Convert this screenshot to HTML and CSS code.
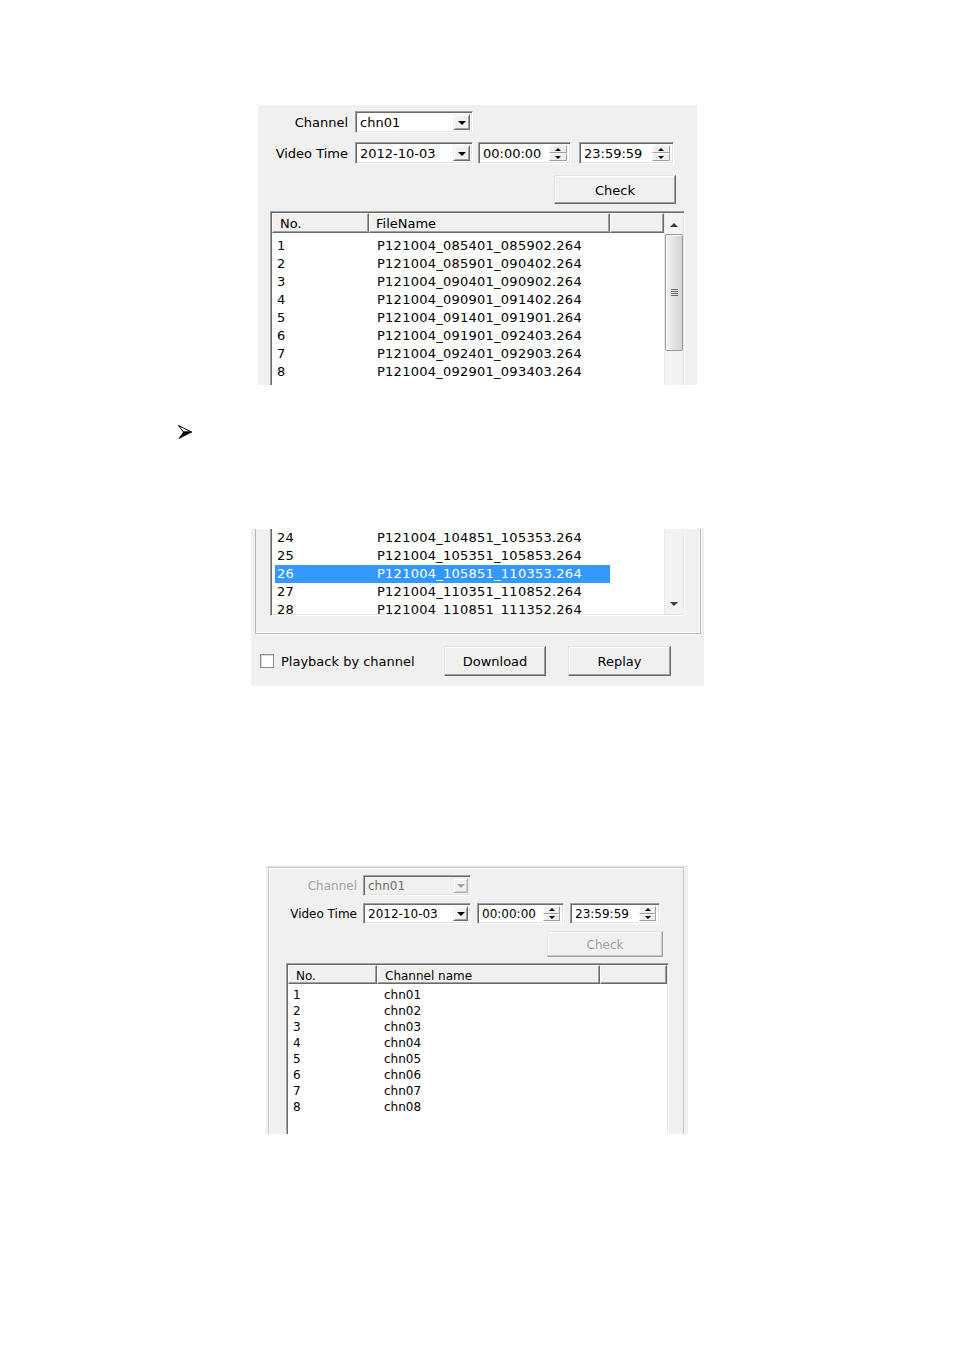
FILE: index.html
```html
<!DOCTYPE html>
<html>
<head>
<meta charset="utf-8">
<link rel="stylesheet" href="styles.css">
</head>
<body>
<div class="doc">

  <div class="fig fig1">
    <div class="frow r1">
      <span class="lbl">Channel</span>
      <div class="combo w-ch"><span class="val">chn01</span><span class="drop"><i class="tri"></i></span></div>
    </div>
    <div class="frow r2">
      <span class="lbl">Video Time</span>
      <div class="combo w-date"><span class="val">2012-10-03</span><span class="drop"><i class="tri"></i></span></div>
      <div class="spin w-t1"><span class="val">00:00:00</span><span class="arrows"><span class="half"><i class="up"></i></span><span class="half"><i class="dn"></i></span></span></div>
      <div class="spin w-t2"><span class="val">23:59:59</span><span class="arrows"><span class="half"><i class="up"></i></span><span class="half"><i class="dn"></i></span></span></div>
    </div>
    <div class="btn check">Check</div>
    <div class="list list1">
      <div class="lmain">
        <div class="lhead"><span class="hc c1">No.</span><span class="hc c2">FileName</span><span class="hc c3"></span></div>
        <div class="lbody">
          <div class="row"><span>1</span><span>P121004_085401_085902.264</span></div>
          <div class="row"><span>2</span><span>P121004_085901_090402.264</span></div>
          <div class="row"><span>3</span><span>P121004_090401_090902.264</span></div>
          <div class="row"><span>4</span><span>P121004_090901_091402.264</span></div>
          <div class="row"><span>5</span><span>P121004_091401_091901.264</span></div>
          <div class="row"><span>6</span><span>P121004_091901_092403.264</span></div>
          <div class="row"><span>7</span><span>P121004_092401_092903.264</span></div>
          <div class="row"><span>8</span><span>P121004_092901_093403.264</span></div>
        </div>
      </div>
      <div class="vscroll vs1">
        <span class="sbtn"><i class="sup"></i></span>
        <span class="thumb"><i class="grip"></i><i class="grip"></i><i class="grip"></i><i class="grip"></i></span>
      </div>
    </div>
  </div>

  <div class="bullet">
    <svg width="14" height="14" viewBox="0 0 14 14">
      <polygon points="0.5,0.5 13.5,7 5.5,7" fill="#fff" stroke="#000" stroke-width="1" stroke-linejoin="miter"/>
      <polygon points="5.5,7 13.5,7 1,13.5" fill="#000" stroke="#000" stroke-width="0.8"/>
    </svg>
  </div>

  <div class="fig fig2">
    <div class="frame2">
      <div class="list list2">
        <div class="lmain">
          <div class="lbody">
            <div class="row"><span>24</span><span>P121004_104851_105353.264</span></div>
            <div class="row"><span>25</span><span>P121004_105351_105853.264</span></div>
            <div class="row sel"><span>26</span><span>P121004_105851_110353.264</span></div>
            <div class="row"><span>27</span><span>P121004_110351_110852.264</span></div>
            <div class="row"><span>28</span><span>P121004_110851_111352.264</span></div>
          </div>
        </div>
        <div class="vscroll vs2">
          <span class="sbtn"><i class="sdn"></i></span>
        </div>
      </div>
    </div>
    <div class="brow">
      <span class="chk"></span>
      <span class="chklbl">Playback by channel</span>
      <div class="btn dl">Download</div>
      <div class="btn rp">Replay</div>
    </div>
  </div>

  <div class="fig fig3">
    <div class="frame3">
      <div class="frow r1">
        <span class="lbl dis">Channel</span>
        <div class="combo w-ch disabled"><span class="val">chn01</span><span class="drop"><i class="tri"></i></span></div>
      </div>
      <div class="frow r2">
        <span class="lbl">Video Time</span>
        <div class="combo w-date"><span class="val">2012-10-03</span><span class="drop"><i class="tri"></i></span></div>
        <div class="spin w-t1"><span class="val">00:00:00</span><span class="arrows"><span class="half"><i class="up"></i></span><span class="half"><i class="dn"></i></span></span></div>
        <div class="spin w-t2"><span class="val">23:59:59</span><span class="arrows"><span class="half"><i class="up"></i></span><span class="half"><i class="dn"></i></span></span></div>
      </div>
      <div class="btn check disabled">Check</div>
      <div class="list list3">
        <div class="lmain">
          <div class="lhead"><span class="hc c1">No.</span><span class="hc c2">Channel name</span><span class="hc c3"></span></div>
          <div class="lbody">
            <div class="row"><span>1</span><span>chn01</span></div>
            <div class="row"><span>2</span><span>chn02</span></div>
            <div class="row"><span>3</span><span>chn03</span></div>
            <div class="row"><span>4</span><span>chn04</span></div>
            <div class="row"><span>5</span><span>chn05</span></div>
            <div class="row"><span>6</span><span>chn06</span></div>
            <div class="row"><span>7</span><span>chn07</span></div>
            <div class="row"><span>8</span><span>chn08</span></div>
          </div>
        </div>
      </div>
    </div>
  </div>

</div>
</body>
</html>
```

FILE: styles.css
```css
* { box-sizing: border-box; }
html, body { margin: 0; padding: 0; background: #fff; }
body { font-family: "DejaVu Sans", Verdana, sans-serif; font-size: 13px; color: #000; }

.doc { display: flex; flex-direction: column; align-items: flex-start; }

.fig { background: #f0f0f0; overflow: hidden; display: flex; flex-direction: column; align-items: flex-start; flex-shrink: 0; }

/* ---------- common controls ---------- */
.frow { display: flex; align-items: center; flex-shrink: 0; }
.lbl { text-align: right; white-space: nowrap; padding-top: 1px; }
.lbl.dis { color: #a3a3a3; }

.combo, .spin {
  display: flex; align-items: stretch; height: 100%;
  background: #fff;
  border: 1px solid; border-color: #a0a0a0 #fff #fff #a0a0a0;
  box-shadow: inset 1px 1px 0 #696969, inset -1px -1px 0 #e3e3e3;
  padding: 2px 2px 2px 2px;
  flex-shrink: 0;
}
.val { flex: 1; display: flex; align-items: center; padding-left: 2px; padding-top: 1px; white-space: nowrap; }

.drop {
  width: 17px; display: flex; align-items: center; justify-content: center;
  background: #f0f0f0;
  border: 1px solid; border-color: #f0f0f0 #696969 #696969 #f0f0f0;
  box-shadow: inset 1px 1px 0 #fff, inset -1px -1px 0 #a0a0a0;
}
.tri { width: 0; height: 0; border-left: 4px solid transparent; border-right: 4px solid transparent; border-top: 4px solid #000; margin-top: 1px; }

.arrows { width: 18px; display: flex; flex-direction: column; margin-right: 1px; }
.half {
  flex: 1; display: flex; align-items: center; justify-content: center;
  background: #f0f0f0;
  border: 1px solid; border-color: #fff #a0a0a0 #a0a0a0 #fff;
}
.up { width: 0; height: 0; border-left: 3px solid transparent; border-right: 3px solid transparent; border-bottom: 3px solid #000; }
.dn { width: 0; height: 0; border-left: 3px solid transparent; border-right: 3px solid transparent; border-top: 3px solid #000; }

.btn {
  display: flex; align-items: center; justify-content: center; flex-shrink: 0;
  background: #f0f0f0; padding-top: 1px;
  border: 1px solid; border-color: #e3e3e3 #696969 #696969 #e3e3e3;
  box-shadow: inset -1px -1px 0 #a0a0a0, inset 1px 1px 0 #fff;
}
.btn.disabled { color: #a0a0a0; border-color: #e3e3e3 #a0a0a0 #a0a0a0 #e3e3e3; box-shadow: inset -1px -1px 0 #c8c8c8, inset 1px 1px 0 #fff; }

.combo.disabled { background: #f0f0f0; color: #6d6d6d; }
.combo.disabled .drop { border-color: #f0f0f0 #b0b0b0 #b0b0b0 #f0f0f0; box-shadow: inset 1px 1px 0 #fff, inset -1px -1px 0 #d0d0d0; }
.combo.disabled .tri { border-top-color: #a0a0a0; }

.list {
  display: flex; align-items: stretch; flex-shrink: 0;
  background: #fff;
  border: 1px solid; border-color: #a0a0a0 #fff #fff #a0a0a0;
  box-shadow: inset 1px 1px 0 #696969, inset -1px -1px 0 #e3e3e3;
  padding: 1px;
}
.lmain { display: flex; flex-direction: column; }
.lhead { display: flex; flex-shrink: 0; }
.hc {
  display: flex; align-items: center; padding-left: 7px; padding-top: 1px; white-space: nowrap;
  background: #f0f0f0;
  border: 1px solid; border-color: #fff #696969 #696969 #fff;
  box-shadow: inset -1px -1px 0 #a0a0a0;
}
.row { display: grid; margin-left: 3px; white-space: nowrap; }
.row span:first-child { padding-left: 2px; }
.row.sel { background: #3399ff; color: #fff; }

.vscroll { display: flex; flex-direction: column; align-items: center; background: #f3f3f3; border-left: 1px solid #e8e8e8; }
.sbtn { display: flex; align-items: center; justify-content: center; width: 100%; }
.sup { width: 0; height: 0; border-left: 4px solid transparent; border-right: 4px solid transparent; border-bottom: 4px solid #3c3c3c; }
.sdn { width: 0; height: 0; border-left: 4px solid transparent; border-right: 4px solid transparent; border-top: 4px solid #3c3c3c; }
.thumb {
  width: 18px; display: flex; flex-direction: column; align-items: center; justify-content: center; gap: 1px;
  border: 1px solid #9a9a9a; border-radius: 2px;
  background: linear-gradient(to right, #f2f2f2 0%, #e4e4e4 45%, #d4d4d4 100%);
  box-shadow: inset 1px 1px 0 #fff;
}
.grip { display: block; width: 7px; height: 1px; background: #6a6a6a; }

/* ---------- figure 1 ---------- */
.fig1 { margin: 105px 0 0 258px; width: 439px; height: 280px; }
.fig1 .frow { height: 22px; }
.fig1 .r1 { margin-top: 6px; }
.fig1 .r2 { margin-top: 9px; }
.fig1 .lbl { width: 90px; margin-right: 7px; }
.fig1 .w-ch, .fig1 .w-date { width: 118px; }
.fig1 .w-date { margin-right: 5px; }
.fig1 .w-t1 { width: 93px; margin-right: 8px; }
.fig1 .w-t2 { width: 95px; }
.fig1 .check { margin: 11px 0 0 296px; width: 122px; height: 29px; }

.list1 { margin: 7px 0 0 12px; width: 415px; height: 220px; }
.list1 .lmain { width: 392px; }
.list1 .lhead { height: 20px; }
.list1 .c1 { width: 97px; padding-left: 7px; }
.list1 .c2 { width: 241px; padding-left: 6px; }
.list1 .c3 { width: 54px; }
.list1 .lbody { padding-top: 4px; }
.list1 .row, .list2 .row { grid-template-columns: 94px 241px; width: 335px; height: 18px; line-height: 18px; letter-spacing: 0.25px; }
.list1 .row span + span, .list2 .row span + span { padding-left: 8px; }
.vs1 { width: 19px; }
.vs1 .sbtn { height: 21px; padding-top: 3px; }
.vs1 .thumb { height: 117px; }

/* ---------- bullet ---------- */
.bullet { margin: 40px 0 0 178px; width: 14px; height: 14px; line-height: 0; }

/* ---------- figure 2 ---------- */
.fig2 { margin: 90px 0 0 251px; width: 453px; height: 157px; }
.frame2 {
  margin-left: 4px; width: 446px; height: 105px; flex-shrink: 0;
  border: 1px solid #b4b4b4; border-top: none;
  box-shadow: 1px 1px 0 #fff, inset -1px -1px 0 #fff;
}
.list2 {
  margin-left: 14px; width: 415px; height: 87px; border-top: none; padding-top: 0;
  box-shadow: inset 1px 0 0 #696969, inset -1px -1px 0 #e3e3e3;
}
.list2 .lmain { width: 392px; overflow: hidden; }
.list2 .lbody { padding-top: 0; }
.list2 .row { height: 18px; }
.vs2 { width: 19px; justify-content: flex-end; }
.vs2 .sbtn { height: 18px; padding-bottom: 2px; }

.brow { display: flex; align-items: center; height: 30px; margin-top: 12px; flex-shrink: 0; }
.chk { width: 14px; height: 14px; margin-left: 9px; background: #fff; border: 1px solid #8c8c8c; box-shadow: inset 1px 1px 0 #d8d8d8; }
.chklbl { width: 163px; margin-left: 7px; white-space: nowrap; padding-top: 1px; }
.dl { width: 102px; height: 30px; }
.rp { width: 103px; height: 30px; margin-left: 22px; }

/* ---------- figure 3 ---------- */
.fig3 { margin: 180px 0 0 266px; width: 422px; height: 268px; font-size: 12px; border-top: 1px solid #e2e2e2; }
.frame3 {
  margin-left: 2px; width: 416px; height: 280px; flex-shrink: 0;
  display: flex; flex-direction: column; align-items: flex-start;
  border: 1px solid #c9c9c9; border-bottom: none;
  box-shadow: inset 1px 1px 0 #fff;
}
.fig3 .frow { height: 21px; }
.fig3 .r1 { margin-top: 7px; }
.fig3 .r2 { margin-top: 7px; }
.fig3 .lbl { width: 88px; margin-right: 6px; }
.fig3 .r1 .lbl { width: 88px; margin-right: 6px; }
.fig3 .w-ch, .fig3 .w-date { width: 108px; }
.fig3 .w-date { margin-right: 6px; }
.fig3 .w-t1 { width: 87px; margin-right: 6px; }
.fig3 .w-t2 { width: 90px; }
.fig3 .drop { width: 15px; }
.fig3 .arrows { width: 17px; }
.fig3 .check { margin: 7px 0 0 278px; width: 116px; height: 26px; }

.list3 { margin: 6px 0 0 17px; width: 383px; height: 200px; }
.list3 .lmain { width: 379px; }
.list3 .lhead { height: 19px; }
.list3 .hc { padding-top: 2px; }
.list3 .c1 { width: 89px; }
.list3 .c2 { width: 223px; }
.list3 .c3 { width: 67px; }
.list3 .lbody { padding-top: 3px; }
.list3 .row { grid-template-columns: 86px 223px; height: 16px; line-height: 16px; }
.list3 .row span + span { padding-left: 7px; }
```
